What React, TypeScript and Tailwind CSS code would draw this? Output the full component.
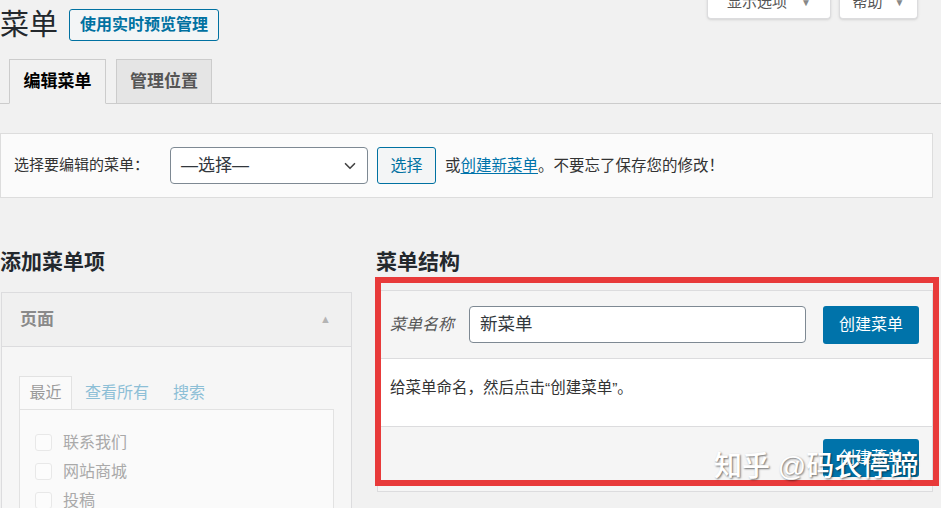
import { ChevronDown } from 'lucide-react';

const pageItems = ['联系我们', '网站商城', '投稿'];

export default function App() {
  return (
    <div className="relative w-[941px] h-[508px] overflow-hidden bg-[#f1f1f1] text-[#23282d] font-['Liberation_Sans','Noto_Sans_CJK_SC',sans-serif]">
      {/* screen meta tabs hanging from the top edge */}
      <div className="absolute right-[23px] -top-[14px] flex gap-[8px]">
        <div className="h-[33px] w-[124px] bg-white border border-t-0 border-[#dcdcde] rounded-b-[4px] shadow-sm flex items-center justify-center gap-[14px] text-[15px] text-[#555]">
          <span>显示选项</span>
          <span className="text-[10px] text-[#888]">▼</span>
        </div>
        <div className="h-[33px] w-[79px] bg-white border border-t-0 border-[#dcdcde] rounded-b-[4px] shadow-sm flex items-center justify-center gap-[12px] text-[15px] text-[#555]">
          <span>帮助</span>
          <span className="text-[10px] text-[#888]">▼</span>
        </div>
      </div>

      {/* title */}
      <div className="flex h-[50px] items-center gap-[11px]">
        <h1 className="text-[29px] leading-none font-normal text-[#23282d]">菜单</h1>
        <a className="h-[32px] px-[10px] flex items-center border border-[#0071a1] rounded-[3px] bg-[#f3f5f6] text-[#0071a1] text-[16px] font-semibold">
          使用实时预览管理
        </a>
      </div>

      {/* nav tabs */}
      <div className="mt-[9px] flex gap-[10px] pl-[9px] border-b border-[#cccccc]">
        <div className="-mb-px h-[45px] w-[97px] flex items-center justify-center border border-[#cccccc] border-b-[#f1f1f1] bg-[#f1f1f1] text-[17px] font-bold text-[#000]">
          编辑菜单
        </div>
        <div className="h-[44px] w-[96px] flex items-center justify-center border border-b-0 border-[#cccccc] bg-[#e5e5e5] text-[17px] font-bold text-[#555]">
          管理位置
        </div>
      </div>

      {/* manage menus */}
      <div className="mt-[29px] w-[933px] h-[65px] flex items-center border border-[#dddddd] bg-[#fbfbfb] px-[13px] text-[15px] text-[#333]">
        <span className="w-[156px]">选择要编辑的菜单：</span>
        <div className="w-[198px] h-[37px] flex items-center justify-between border border-[#7e8993] rounded-[4px] bg-white pl-[10px] pr-[8px] text-[17px] text-[#32373c]">
          <span>—选择—</span>
          <ChevronDown className="w-[18px] h-[18px] text-[#444]" strokeWidth={2.2} />
        </div>
        <div className="ml-[9px] w-[59px] h-[37px] flex items-center justify-center border border-[#0071a1] rounded-[3px] bg-[#f3f5f6] text-[16px] text-[#0071a1]">
          选择
        </div>
        <span className="ml-[9px] text-[15.5px]">
          或<a className="text-[#0073aa] underline underline-offset-2">创建新菜单</a>。不要忘了保存您的修改！
        </span>
      </div>

      {/* columns */}
      <div className="mt-[49px] w-[933px] flex gap-[24px]">
        {/* add menu items */}
        <div className="w-[352px] shrink-0">
          <h2 className="h-[30px] leading-[30px] text-[21px] font-bold text-[#23282d]">添加菜单项</h2>
          <div className="mt-[15px] ml-[1px] w-[351px] h-[260px] border border-[#dcdcde] bg-[#f6f6f6]">
            <div className="h-[54px] flex items-center justify-between pl-[18px] pr-[20px] border-b border-[#dcdcde] bg-[#f0f0f0]">
              <span className="text-[17px] font-bold text-[#8a8a8a]">页面</span>
              <span className="text-[11px] text-[#b4b4b4]">▲</span>
            </div>
            <div className="pt-[29px] pl-[17px]">
              <div className="flex items-end text-[16px]">
                <div className="w-[53px] h-[33px] flex items-center justify-center border border-b-0 border-[#e2e2e2] bg-[#fafafa] text-[#9a9a9a]">
                  最近
                </div>
                <span className="ml-[13px] mb-[4px] text-[#8dbfd6]">查看所有</span>
                <span className="ml-[24px] mb-[4px] text-[#8dbfd6]">搜索</span>
              </div>
              <div className="w-[315px] h-[140px] border border-[#e2e2e2] bg-[#fafafa] pt-[18px] pl-[15px]">
                {pageItems.map((item) => (
                  <div key={item} className="h-[29px] flex items-center gap-[11px]">
                    <span className="w-[17px] h-[17px] border border-[#e8e8e8] rounded-[3px] bg-[#fcfcfc]" />
                    <span className="text-[16px] text-[#a9a9a9]">{item}</span>
                  </div>
                ))}
              </div>
            </div>
          </div>
        </div>

        {/* menu structure */}
        <div className="relative flex-1">
          <h2 className="h-[30px] leading-[30px] text-[21px] font-bold text-[#23282d]">菜单结构</h2>
          <div className="mt-[13px] ml-[1px] border border-[#dcdcde] bg-white">
            <div className="h-[68px] flex items-center pl-[12px] pr-[13px] border-b border-[#dcdcde] bg-[#f5f5f5]">
              <span className="w-[79px] text-[16px] italic text-[#555]">菜单名称</span>
              <div className="w-[337px] h-[37px] flex items-center border border-[#7e8993] rounded-[4px] bg-white px-[10px] text-[17.5px] text-[#32373c]">
                新菜单
              </div>
              <div className="ml-auto w-[96px] h-[38px] flex items-center justify-center rounded-[3px] bg-[#0073aa] text-[16px] text-white">
                创建菜单
              </div>
            </div>
            <div className="h-[67px] pt-[18px] px-[12px] text-[15.5px] leading-[22px] text-[#333]">
              给菜单命名，然后点击“创建菜单”。
            </div>
            <div className="flex justify-end border-t border-[#dcdcde] bg-[#f5f5f5] pt-[12px] pb-[14px] pr-[13px]">
              <div className="w-[96px] h-[38px] flex items-center justify-center rounded-[3px] bg-[#0073aa] text-[16px] text-white">
                创建菜单
              </div>
            </div>
          </div>
          {/* red annotation box */}
          <div className="absolute left-[-1px] top-[30px] w-[564px] h-[209px] border-[6px] border-[#e83a3a]" />
        </div>
      </div>

      {/* watermark */}
      <div className="absolute left-[714px] top-[446px] text-[28px] font-medium text-white whitespace-nowrap [text-shadow:1px_1px_2px_rgba(0,0,0,0.55)]">
        知乎 @码农停蹄
      </div>
    </div>
  );
}
